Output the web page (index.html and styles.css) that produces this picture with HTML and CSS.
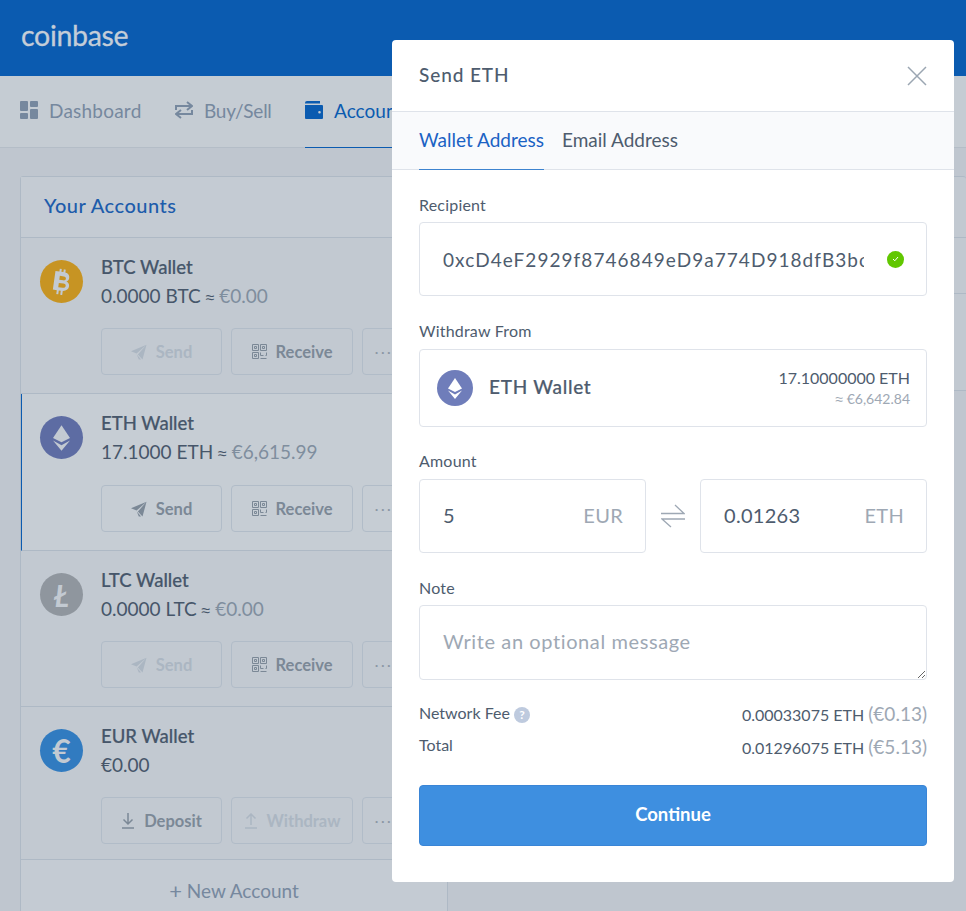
FILE: index.html
```html
<!DOCTYPE html>
<html lang="en">

<head>
    <meta charset="UTF-8">
    <meta name="viewport" content="width=device-width, initial-scale=1.0">
    <title>Coinbase - Send ETH</title>
    <link rel="stylesheet" href="styles.css">
</head>

<body>

    <svg class="sprites" width="0" height="0">
        <symbol id="i-send" viewBox="0 0 16 16">
            <path d="M15.5 .8 L0 7.2 L5.6 9.6 L15.5 .8 Z M15.5 .8 L6.9 10.6 L11.5 15.6 Z M5.8 10.6 L8.4 13.4 L10 15.6 L7.8 15.6 Z" fill="currentColor"/>
        </symbol>
        <symbol id="i-qr" viewBox="0 0 15 15">
            <path d="M.5 .5h6v6h-6z M8.5 .5h6v6h-6z M.5 8.5h6v6h-6z M2.5 2.500h2v2h-2z M10.5 2.500h2v2h-2z M2.500 10.500h2v2h-2z M8.500 8.500v3h3M14.500 8.500v3h-1M8.500 14.500h6" fill="none" stroke="currentColor"/>
        </symbol>
        <symbol id="i-eth" viewBox="0 0 20 30">
            <path d="M10 0 L20 15 L10 20 L0 15 Z" fill="currentColor"/>
            <path d="M0 18 L10 23.400 L20 18 L10 30 Z" fill="currentColor"/>
            <path d="M10 11.500 L16.500 15.200 L10 18.500 L3.500 15.200 Z" fill="currentColor" opacity=".7"/>
        </symbol>
    </svg>

    <header class="topbar">
        <span class="logo">coinbase</span>
    </header>

    <nav class="tabs-nav">
        <a class="nav-item nav-dash">
            <svg width="18" height="18" viewBox="0 0 18 18" fill="currentColor"><rect width="8" height="10" rx="1"/><rect x="10" width="8" height="6" rx="1"/><rect y="12" width="8" height="6" rx="1"/><rect x="10" y="8" width="8" height="10" rx="1"/></svg>
            Dashboard
        </a>
        <a class="nav-item nav-trade">
            <svg width="18" height="18" viewBox="0 0 18 18" fill="none" stroke="currentColor" stroke-width="2"><path d="M1 9V5h15M12 1l5 4-5 4M17 9v4H2M6 9l-5 4 5 4"/></svg>
            Buy/Sell
        </a>
        <a class="nav-item nav-active">
            <svg width="18" height="18" viewBox="0 0 18 18" fill="currentColor"><path d="M2 0h13v2.500H0V2a2 2 0 0 1 2-2z"/><path fill-rule="evenodd" d="M0 4h17a1 1 0 0 1 1 1v12a1 1 0 0 1-1 1H1a1 1 0 0 1-1-1z M14.500 10a1.300 1.300 0 1 0 0 2.600 1.300 1.300 0 0 0 0-2.600z"/></svg>
            Accounts
        </a>
    </nav>

    <main class="page">
        <section class="card accounts">
            <h2 class="card-title">Your Accounts</h2>

            <div class="wallet">
                <span class="coin coin-btc">
                    <svg width="18" height="26" viewBox="0 0 18 26"><path fill-rule="evenodd" d="M5 0h2v3h2V0h2v3.200c3 .5 4.600 2.200 4.600 4.800 0 1.800-.9 3.100-2.300 3.900 2 .7 3.300 2.200 3.300 4.400 0 3-2 5-5.600 5.400V26H9v-4.200H7V26H5v-4.200H1V3h4z M6 7.200v4h4c1.500 0 2.400-.8 2.400-2s-.9-2-2.400-2z M6 14.400v4.200h4.600c1.600 0 2.600-.8 2.600-2.100s-1-2.100-2.600-2.100z"/></svg>
                </span>
                <div class="wallet-body">
                    <h3>BTC Wallet</h3>
                    <p class="balance">0.0000 BTC <span class="dim"><small>≈</small> €0.00</span></p>
                    <div class="actions">
                        <button class="btn btn-off"><svg width="16" height="16"><use href="#i-send"/></svg>Send</button>
                        <button class="btn"><svg class="qr" width="15" height="15"><use href="#i-qr"/></svg>Receive</button>
                        <button class="btn btn-more">···</button>
                    </div>
                </div>
            </div>

            <div class="wallet wallet-active">
                <span class="coin coin-eth"><svg width="17" height="26"><use href="#i-eth"/></svg></span>
                <div class="wallet-body">
                    <h3>ETH Wallet</h3>
                    <p class="balance">17.1000 ETH <span class="dim"><small>≈</small> €6,615.99</span></p>
                    <div class="actions">
                        <button class="btn"><svg width="16" height="16"><use href="#i-send"/></svg>Send</button>
                        <button class="btn"><svg class="qr" width="15" height="15"><use href="#i-qr"/></svg>Receive</button>
                        <button class="btn btn-more">···</button>
                    </div>
                </div>
            </div>

            <div class="wallet">
                <span class="coin coin-ltc">Ł</span>
                <div class="wallet-body">
                    <h3>LTC Wallet</h3>
                    <p class="balance">0.0000 LTC <span class="dim"><small>≈</small> €0.00</span></p>
                    <div class="actions">
                        <button class="btn btn-off"><svg width="16" height="16"><use href="#i-send"/></svg>Send</button>
                        <button class="btn"><svg class="qr" width="15" height="15"><use href="#i-qr"/></svg>Receive</button>
                        <button class="btn btn-more">···</button>
                    </div>
                </div>
            </div>

            <div class="wallet wallet-last">
                <span class="coin coin-eur">€</span>
                <div class="wallet-body">
                    <h3>EUR Wallet</h3>
                    <p class="balance">€0.00</p>
                    <div class="actions">
                        <button class="btn">
                            <svg width="14" height="16" viewBox="0 0 14 16" fill="none" stroke="currentColor" stroke-width="1.500"><path d="M7 0v10.500M2.500 6.500L7 11l4.500-4.500M1 15h12"/></svg>
                            Deposit
                        </button>
                        <button class="btn btn-off">
                            <svg width="14" height="16" viewBox="0 0 14 16" fill="none" stroke="currentColor" stroke-width="1.500"><path d="M7 12V1.500M2.500 5.500L7 1l4.500 4.500M1 15h12"/></svg>
                            Withdraw
                        </button>
                        <button class="btn btn-more">···</button>
                    </div>
                </div>
            </div>

            <a class="new-account"><span class="plus">+</span> New Account</a>
        </section>

        <section class="card side">
            <div class="side-row side-head"></div>
            <div class="side-row side-mid"></div>
            <div class="side-row side-low"></div>
        </section>
    </main>

    <div class="modal">
        <div class="modal-head">
            <h2>Send ETH</h2>
            <svg class="close" width="20" height="20" viewBox="0 0 20 20" fill="none" stroke="currentColor" stroke-width="1.500"><path d="M1 1l18 18M19 1L1 19"/></svg>
        </div>

        <div class="modal-tabs">
            <a class="modal-tab tab-on">Wallet Address</a>
            <a class="modal-tab">Email Address</a>
        </div>

        <form class="modal-body">
            <label class="field-label">Recipient</label>
            <div class="box box-recipient">
                <input class="address" type="text" value="0xcD4eF2929f8746849eD9a774D918dfB3bc4a8f21">
                <span class="ok">
                    <svg width="7" height="6" viewBox="0 0 7 6" fill="none" stroke="#fff" stroke-width="1"><path d="M1 3l1.800 1.800L6 1"/></svg>
                </span>
            </div>

            <label class="field-label">Withdraw From</label>
            <div class="box box-wallet">
                <span class="coin-small"><svg width="14" height="21"><use href="#i-eth"/></svg></span>
                <span class="box-name">ETH Wallet</span>
                <div class="box-amount">
                    <div>17.10000000 ETH</div>
                    <small><span class="approx">≈</span> €6,642.84</small>
                </div>
            </div>

            <label class="field-label">Amount</label>
            <div class="amount-row">
                <div class="box box-money">
                    <span>5</span>
                    <span class="unit">EUR</span>
                </div>
                <svg class="swap" width="24" height="24" viewBox="0 0 24 24" fill="none" stroke="currentColor" stroke-width="1.300"><path d="M0 9.500h23L14 1M24 15H1l9 8"/></svg>
                <div class="box box-money">
                    <span>0.01263</span>
                    <span class="unit">ETH</span>
                </div>
            </div>

            <label class="field-label">Note</label>
            <textarea class="note" placeholder="Write an optional message"></textarea>

            <div class="sum-row sum-fee">
                <span class="sum-name">Network Fee <i class="help">?</i></span>
                <span>0.00033075 ETH <em>(€0.13)</em></span>
            </div>
            <div class="sum-row sum-total">
                <span class="sum-name">Total</span>
                <span>0.01296075 ETH <em>(€5.13)</em></span>
            </div>

            <button class="continue" type="button">Continue</button>
        </form>
    </div>

</body>

</html>
```

FILE: styles.css
```css
* {
    box-sizing: border-box;
}

html,
body {
    height: 911px;
}

body {
    margin: 0;
    overflow: hidden;
    position: relative;
    font-family: Lato, "Open Sans", sans-serif;
    color: #46566a;
    background-color: #bfc6cf;
}

.sprites {
    position: absolute;
}

.topbar {
    height: 76px;
    padding: 13px 21px;
    background-color: #0b5bb0;
}

.logo {
    font-size: 28.500px;
    line-height: 44px;
    color: #c4cdd8;
    letter-spacing: -0.3px;
    -webkit-text-stroke: 0.3px;
}

.tabs-nav {
    height: 72px;
    display: flex;
    gap: 33.500px;
    padding-left: 20px;
    background-color: #c5ccd3;
    border-bottom: 1px solid #b4bdc7;
}

.nav-item {
    display: flex;
    align-items: center;
    gap: 11px;
    height: 71px;
    padding-bottom: 3px;
    font-size: 19px;
    color: #76889e;
}

.nav-dash {
    letter-spacing: 0.22px;
}

.nav-trade {
    letter-spacing: -0.25px;
}

.nav-active {
    height: 72px;
    padding-right: 40px;
    color: #0b5bb0;
    border-bottom: 1px solid #0b5bb0;
}

.page {
    display: flex;
    align-items: flex-start;
    gap: 20px;
    padding: 28px 0 0 20px;
}

.card {
    background-color: #c2c9d1;
    border: 1px solid #aeb9c5;
    border-radius: 3px 3px 0 0;
}

.accounts {
    width: 428px;
    height: 760px;
    flex-shrink: 0;
}

.card-title {
    margin: 0;
    height: 61px;
    padding-left: 23px;
    font-size: 20px;
    font-weight: 500;
    letter-spacing: 0.5px;
    line-height: 56px;
    color: #1d5cab;
    background-color: #c4cbd3;
    border-bottom: 1px solid #aeb9c5;
}

.wallet {
    display: flex;
    gap: 18px;
    height: 156px;
    padding: 20px 0 0 19px;
    border-bottom: 1px solid #aeb9c5;
}

.wallet-active {
    height: 157px;
    padding-left: 18px;
    background-color: #c6cdd4;
    border-left: 1px solid #0b5bb0;
}

.wallet-active .actions {
    margin-top: 23px;
}

.wallet-last {
    height: 153px;
}

.coin {
    width: 43px;
    height: 43px;
    margin-top: 2px;
    flex-shrink: 0;
    border-radius: 50%;
    display: flex;
    align-items: center;
    justify-content: center;
    color: #c3cad2;
    font-weight: 700;
}

.coin-btc {
    background-color: #c79423;
}

.coin-btc svg {
    fill: currentColor;
    transform: rotate(8deg);
}

.coin-eth {
    background-color: #5d6ca3;
}

.coin-ltc {
    background-color: #8f969e;
    font-size: 30px;
    font-style: italic;
}

.coin-eur {
    background-color: #317bc0;
    font-size: 32px;
}

.wallet-body h3 {
    margin: 0;
    font-size: 18.500px;
    font-weight: 500;
    line-height: 18px;
    -webkit-text-stroke: 0.2px;
}

.balance {
    margin: 10px 0 0;
    font-size: 19px;
    line-height: 20px;
}

.dim {
    color: #7f8e9e;
}

.dim small {
    font-family: "Liberation Sans", sans-serif;
    font-size: 16px;
    line-height: 0;
    color: #46566a;
}

.actions {
    display: flex;
    gap: 9px;
    margin-top: 22px;
}

.btn {
    width: 121px;
    height: 47px;
    display: flex;
    align-items: center;
    justify-content: center;
    gap: 9px;
    padding: 0;
    font-family: inherit;
    font-size: 16.500px;
    font-weight: 700;
    color: #7b8896;
    background: transparent;
    border: 1px solid #b1bcc8;
    border-radius: 4px;
}

.btn-off {
    color: #abb6c2;
}

.btn .qr {
    flex-shrink: 0;
}

.btn + .btn {
    width: 122px;
}

.btn + .btn + .btn-more {
    width: 44px;
    font-size: 14px;
    font-weight: 400;
    letter-spacing: 2.500px;
    color: #8b97a5;
}

.new-account {
    display: block;
    text-align: center;
    font-size: 19px;
    line-height: 62px;
    color: #76889e;
    background-color: #c4cbd3;
}

.plus {
    font-size: 22px;
    vertical-align: -1px;
}

.side {
    flex: 1;
    border-right: 0;
}

.side-row {
    border-bottom: 1px solid #aeb9c5;
}

.side-head {
    height: 61px;
}

.side-mid {
    height: 56px;
}

.side-low {
    height: 96px;
    border-bottom: 0;
}

/* modal over the dimmed page */
.modal {
    position: absolute;
    left: 392px;
    top: 40px;
    width: 562px;
    height: 842px;
    background-color: #fff;
    border-radius: 4px;
    color: #4e5c6e;
}

.modal-head {
    height: 72px;
    display: flex;
    align-items: center;
    justify-content: space-between;
    padding: 0 27px;
    border-bottom: 1px solid #dfe3ea;
}

.modal-head h2 {
    margin: 0 0 2px;
    font-size: 19px;
    font-weight: 500;
    letter-spacing: 0.9px;
}

.close {
    color: #9ba6b2;
}

.modal-tabs {
    height: 58px;
    display: flex;
    gap: 18px;
    padding-left: 27px;
    background-color: #f9fafc;
    border-bottom: 1px solid #dfe3ea;
}

.modal-tab {
    height: 58px;
    font-size: 19px;
    line-height: 55px;
}

.tab-on {
    color: #1b62c4;
    border-bottom: 1px solid #3d83cf;
}

.modal-body {
    padding: 25px 27px 0;
    display: flex;
    flex-direction: column;
}

.field-label {
    font-size: 16px;
    letter-spacing: 0.2px;
    line-height: 20px;
    margin-bottom: 7px;
}

.box {
    display: flex;
    align-items: center;
    border: 1px solid #dfe3ea;
    border-radius: 4px;
    background-color: #fff;
}

.box-recipient {
    height: 74px;
    margin-bottom: 25px;
    padding: 0 22px 0 23px;
}

.address {
    flex: 1;
    min-width: 0;
    padding: 0;
    border: 0;
    outline: 0;
    font-family: inherit;
    font-size: 19px;
    letter-spacing: 1.050px;
    color: #4e5c6e;
}

.ok {
    width: 17px;
    height: 17px;
    margin-left: 23px;
    flex-shrink: 0;
    border-radius: 50%;
    background-color: #61c700;
    display: flex;
    align-items: center;
    justify-content: center;
}

.box-wallet {
    height: 78px;
    margin-top: 1px;
    margin-bottom: 24px;
    padding: 0 16px 0 17px;
}

.coin-small {
    width: 36px;
    height: 36px;
    border-radius: 50%;
    color: #fff;
    background-color: #6f7dba;
    display: flex;
    align-items: center;
    justify-content: center;
}

.box-name {
    margin-left: 16px;
    margin-bottom: 3px;
    font-size: 19px;
    font-weight: 500;
    letter-spacing: 0.7px;
    -webkit-text-stroke: 0.2px;
}

.box-amount {
    margin-left: auto;
    padding-bottom: 2px;
    text-align: right;
    font-size: 16px;
}

.box-amount small {
    display: block;
    margin-top: 3px;
    font-size: 14px;
    color: #9ea8b4;
}

.approx {
    font-family: "Liberation Sans", sans-serif;
}

.amount-row {
    display: flex;
    align-items: center;
    justify-content: space-between;
    margin-top: 1px;
    margin-bottom: 25px;
}

.box-money {
    width: 227px;
    height: 74px;
    justify-content: space-between;
    padding: 0 22px 3px 23px;
    font-size: 20px;
    letter-spacing: 0.3px;
}

.unit {
    color: #9ea8b4;
}

.swap {
    color: #9ea8b4;
}

.note {
    height: 75px;
    margin-bottom: 23px;
    padding: 23px 23px 0;
    border: 1px solid #dfe3ea;
    border-radius: 4px;
    outline: 0;
    font-family: inherit;
    font-size: 20px;
    letter-spacing: 0.6px;
    color: #4e5c6e;
}

.note::placeholder {
    color: #9ea8b4;
}

.sum-row {
    display: flex;
    justify-content: space-between;
    align-items: center;
    height: 20px;
    font-size: 16px;
}

.sum-total {
    margin-top: 13px;
    margin-bottom: 29px;
}

.sum-total .sum-name {
    margin-top: -3px;
}

.sum-row em {
    font-style: normal;
    font-size: 19px;
    color: #9ea8b4;
}

.help {
    display: inline-block;
    width: 16px;
    height: 16px;
    border-radius: 50%;
    background-color: #becade;
    color: #fff;
    font-size: 12px;
    font-style: normal;
    font-weight: 700;
    line-height: 16px;
    text-align: center;
}

.continue {
    height: 61px;
    padding-bottom: 5px;
    border: 1px solid #3a85d6;
    border-radius: 4px;
    background-color: #3e8fe0;
    color: #fff;
    font-family: inherit;
    font-size: 18.500px;
    font-weight: 700;
}
```
